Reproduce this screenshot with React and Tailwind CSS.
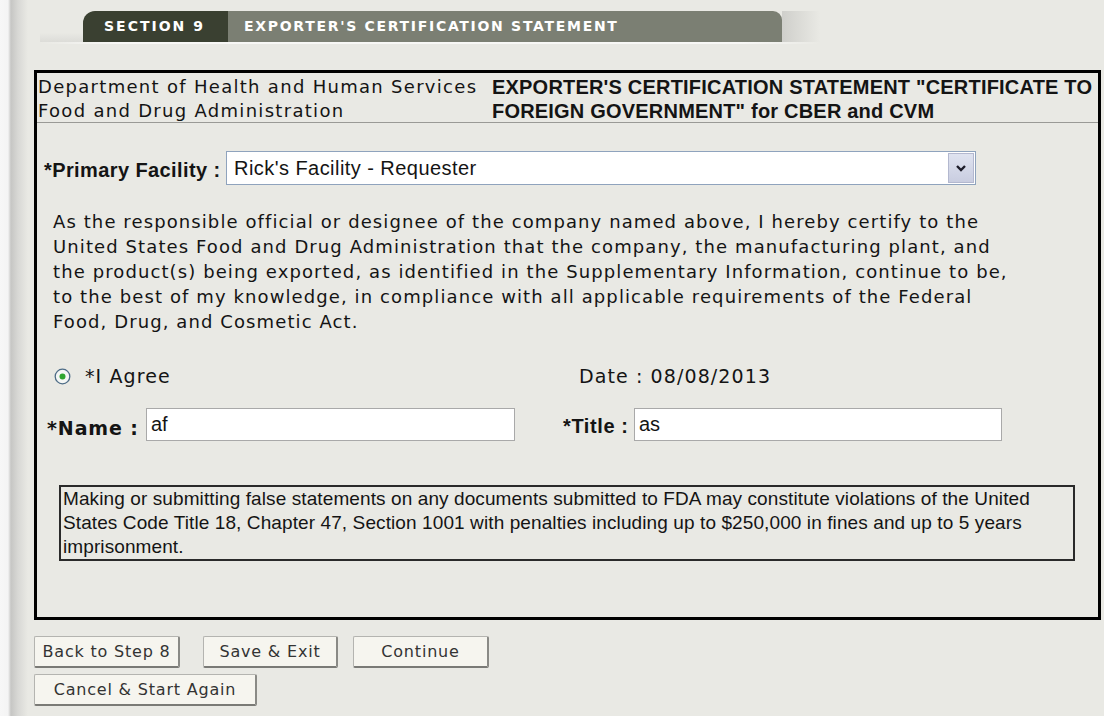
import React from 'react';

const verdana = "font-['DejaVu_Sans',Verdana,sans-serif]";
const arial = "font-['Liberation_Sans',Arial,sans-serif]";

const paragraph = [
    'As the responsible official or designee of the company named above, I hereby certify to the',
    'United States Food and Drug Administration that the company, the manufacturing plant, and',
    'the product(s) being exported, as identified in the Supplementary Information, continue to be,',
    'to the best of my knowledge, in compliance with all applicable requirements of the Federal',
    'Food, Drug, and Cosmetic Act.',
];

const warning = [
    'Making or submitting false statements on any documents submitted to FDA may constitute violations of the United',
    'States Code Title 18, Chapter 47, Section 1001 with penalties including up to $250,000 in fines and up to 5 years',
    'imprisonment.',
];

const Button = ({ label, width }) => (
    <button
        className={`h-[32px] ${width} bg-[#f6f5ef] border border-[#b4b4b0] border-r-2 border-b-2 border-r-[#8a8a86] border-b-[#7a7a76] rounded-[2px] text-[16px] tracking-[0.8px] text-[#333] ${verdana}`}
    >
        {label}
    </button>
);

const App = () => {
    return (
        <div className="flex min-h-[716px] w-[1104px] bg-[#e9e9e4] text-[#141414]">
            {/* left shadow strip */}
            <div className="w-[28px] shrink-0 bg-[linear-gradient(to_right,#f7f7f7_0px,#f4f4f4_8px,#c6c6c4_11px,#d8d8d5_18px,#e9e9e4_28px)]"></div>

            <div className="flex flex-col pl-[6px] w-[1073px]">
                {/* Section tab */}
                <div className="flex flex-col pt-[11px] ml-[6px] w-[780px]">
                    <div className="flex items-stretch h-[31px]">
                        <div className="w-[43px] bg-[linear-gradient(to_bottom,transparent_70%,#dcdcd8)]"></div>
                        <div className="flex w-[699px] rounded-tl-[12px] rounded-tr-[9px] overflow-hidden">
                            <div className={`w-[145px] bg-[#3a4031] text-white text-[14px] font-bold tracking-[2px] flex items-center pl-[21px] ${verdana}`}>
                                SECTION 9
                            </div>
                            <div className={`flex-1 bg-[#7b7f73] text-white text-[14px] font-bold tracking-[1.7px] flex items-center pl-[16px] ${verdana}`}>
                                EXPORTER'S CERTIFICATION STATEMENT
                            </div>
                        </div>
                        <div className="flex-1 bg-[linear-gradient(to_right,#cfcfcb,#e9e9e4)]"></div>
                    </div>
                    <div className="h-[2px] bg-[linear-gradient(to_right,#e9e9e4,#f8f8f6_10%,#f8f8f6_90%,#e9e9e4)]"></div>
                </div>

                {/* Main box */}
                <div className="mt-[26px] w-[1067px] h-[550px] border-[3px] border-black flex flex-col">
                    <div className="flex h-[50px] border-b border-[#9a9a96] pt-[2px]">
                        <div className={`w-[455px] pl-[1px] text-[18px] leading-[24px] tracking-[1.3px] whitespace-nowrap ${verdana}`}>
                            Department of Health and Human Services<br />Food and Drug Administration
                        </div>
                        <div className={`flex-1 text-[20px] leading-[24px] font-bold tracking-[0.2px] whitespace-nowrap ${arial}`}>
                            EXPORTER'S CERTIFICATION STATEMENT "CERTIFICATE TO<br />FOREIGN GOVERNMENT" for CBER and CVM
                        </div>
                    </div>

                    {/* Primary facility */}
                    <div className="flex items-center mt-[28px] pl-[7px]">
                        <span className={`w-[182px] pt-[4px] text-[20px] font-bold tracking-[0.4px] whitespace-nowrap ${arial}`}>*Primary Facility :</span>
                        <div className="flex items-center w-[750px] h-[34px] bg-white border border-[#8fa3bd]">
                            <span className={`flex-1 pl-[7px] text-[20px] tracking-[0.45px] ${arial}`}>Rick's Facility - Requester</span>
                            <div className="w-[26px] h-[30px] mr-[1px] bg-[linear-gradient(to_bottom,#dfe3f0,#c9cde0)] border border-[#b3b8cf] flex items-center justify-center">
                                <svg width="12" height="8" viewBox="0 0 12 8">
                                    <path d="M2 2 L6 6 L10 2" fill="none" stroke="#1d1d2a" strokeWidth="2.4" />
                                </svg>
                            </div>
                        </div>
                    </div>

                    {/* Certification paragraph */}
                    <div className={`mt-[24px] pl-[16px] text-[18px] leading-[25px] tracking-[1.1px] whitespace-nowrap ${verdana}`}>
                        {paragraph.map((line) => (
                            <div key={line}>{line}</div>
                        ))}
                    </div>

                    {/* Agree + date */}
                    <div className={`flex items-center mt-[30px] h-[25px] text-[19px] tracking-[1.1px] ${verdana}`}>
                        <div className="w-[48px] pl-[17px] flex items-center">
                            <svg width="17" height="17" viewBox="0 0 17 17">
                                <circle cx="8.5" cy="8.5" r="7.3" fill="#f4f6f4" stroke="#4d6c86" strokeWidth="1.3" />
                                <circle cx="8.5" cy="8.5" r="3" fill="#2fa52f" />
                            </svg>
                        </div>
                        <span className="w-[494px]">*I Agree</span>
                        <span>Date : 08/08/2013</span>
                    </div>

                    {/* Name / Title */}
                    <div className="flex items-center h-[33px] mt-[19px] pl-[10px]">
                        <span className={`w-[99px] pt-[8px] text-[19px] font-bold tracking-[0.9px] whitespace-nowrap ${verdana}`}>*Name :</span>
                        <div className={`w-[369px] h-[33px] bg-white border border-[#a9a9a9] pl-[4px] text-[20px] ${arial}`}>af</div>
                        <span className={`ml-[48px] w-[71px] pt-[2px] text-[20px] font-bold tracking-[0.6px] whitespace-nowrap ${arial}`}>*Title :</span>
                        <div className={`w-[368px] h-[33px] bg-white border border-[#a9a9a9] pl-[4px] text-[20px] ${arial}`}>as</div>
                    </div>

                    {/* Warning */}
                    <div className={`mt-[44px] ml-[22px] w-[1016px] h-[76px] border-2 border-[#2a2a2a] pl-[2px] text-[19px] leading-[24px] whitespace-nowrap tracking-[0.1px] ${arial}`}>
                        {warning.map((line) => (
                            <div key={line}>{line}</div>
                        ))}
                    </div>
                </div>

                {/* Buttons */}
                <div className="flex flex-col gap-[6px] mt-[16px]">
                    <div className="flex gap-[23px]">
                        <Button label="Back to Step 8" width="w-[146px]" />
                        <div className="flex gap-[15px]">
                            <Button label="Save & Exit" width="w-[135px]" />
                            <Button label="Continue" width="w-[136px]" />
                        </div>
                    </div>
                    <Button label="Cancel & Start Again" width="w-[223px]" />
                </div>
            </div>
        </div>
    );
};

export default App;
